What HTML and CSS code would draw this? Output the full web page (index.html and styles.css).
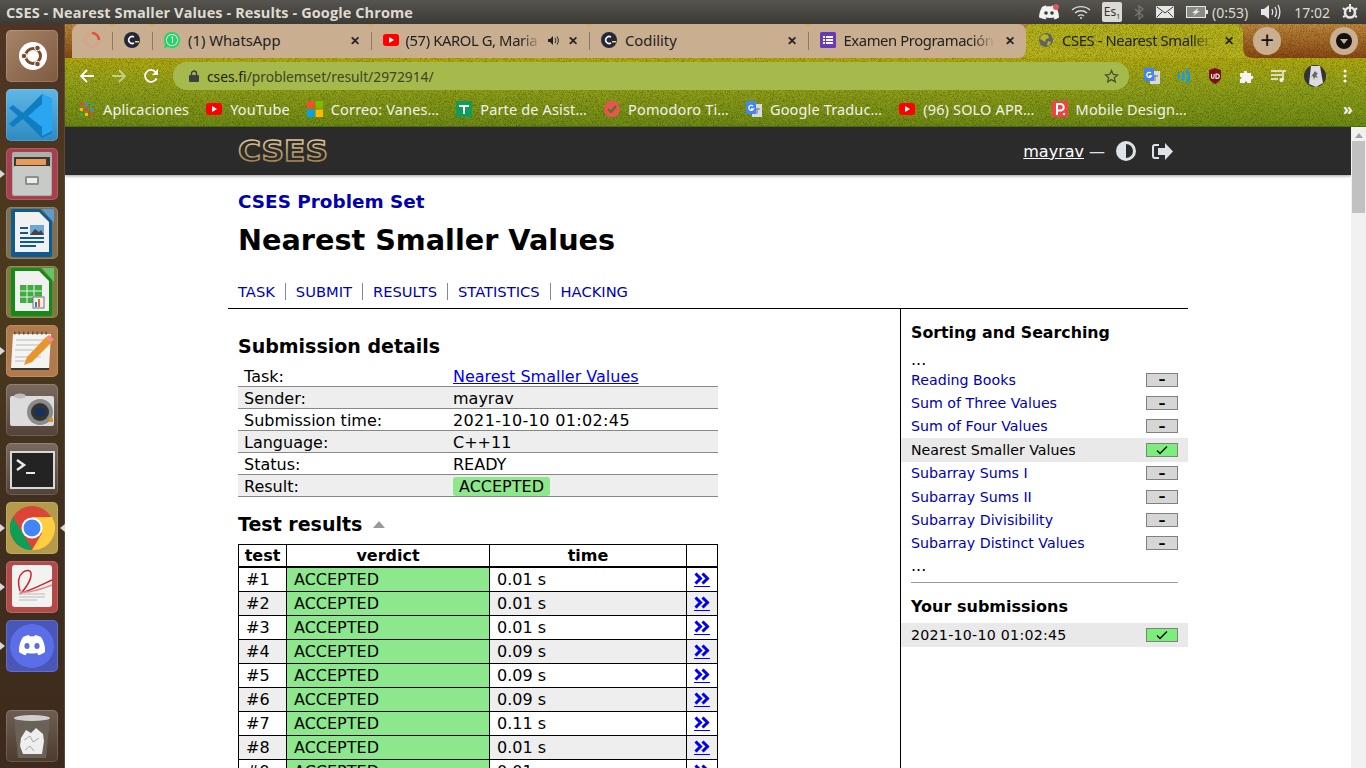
FILE: index.html
```html
<!DOCTYPE html>
<html lang="en">
<head>
    <meta charset="UTF-8">
    <meta name="viewport" content="width=device-width, initial-scale=1.0">
    <title>CSES - Nearest Smaller Values - Results</title>
    <link rel="stylesheet" href="styles.css">
</head>
<body>
<svg class="defs" width="0" height="0">
    <symbol id="chevrons" viewBox="0 0 16 13"><path fill="none" stroke="#0000ee" stroke-width="3" d="M1.500 1.500l5 5-5 5M8.500 1.500l5 5-5 5"/></symbol>
    <symbol id="check" viewBox="0 0 12 10"><path fill="none" stroke="#111" stroke-width="1.500" d="M1 5.500l3 3 7-7"/></symbol>
</svg>
<div class="desktop">

    <!-- Ubuntu top panel -->
    <header class="panel">
        <div class="panel__title">CSES - Nearest Smaller Values - Results - Google Chrome</div>
        <div class="panel__tray">
            <svg class="tray-discord" width="22" height="16" viewBox="0 0 22 16"><path fill="#f2f2f2" d="M4 3c2-1 3-1.500 4-1.500l.5 1c1.500-.2 3.500-.2 5 0l.5-1c1 0 2 .5 4 1.500 2 3.500 3 7 3 10.500-1.500 1-3 1.500-4.500 2l-1-1.500 1.500-1c-3 1.300-7 1.300-10 0l1.500 1-1 1.500C6 15 4.500 14.500 1 13.500 1 10 2 6.500 4 3z"/><circle cx="8" cy="9" r="1.800" fill="#3c3b37"/><circle cx="14" cy="9" r="1.800" fill="#3c3b37"/><circle cx="18" cy="3" r="3" fill="#e25555"/></svg>
            <svg class="tray-wifi" width="20" height="14" viewBox="0 0 20 14"><g fill="none" stroke="#dcdcdc" stroke-width="1.400"><path d="M1 5c5-4.500 13-4.500 18 0"/><path d="M4 8c3.500-3 8.500-3 12 0"/><path d="M7 11c2-1.500 4-1.500 6 0"/></g><circle cx="10" cy="13" r="1" fill="#dcdcdc"/></svg>
            <span class="tray-lang">Es<sub>1</sub></span>
            <svg class="tray-bt" width="10" height="15" viewBox="0 0 10 15"><path fill="none" stroke="#77766f" stroke-width="1.300" d="M1 4l8 7-4 3V1l4 3-8 7"/></svg>
            <svg class="tray-mail" width="18" height="12" viewBox="0 0 18 12"><rect width="18" height="12" rx="1" fill="#e6e6e6"/><path fill="none" stroke="#3c3b37" d="M1 1l8 6 8-6M1 11l5-5M17 11l-5-5"/></svg>
            <svg class="tray-battery" width="22" height="12" viewBox="0 0 22 12"><rect x=".5" y=".5" width="19" height="11" fill="#8a8a84" stroke="#e6e6e6"/><rect x="20" y="4" width="2" height="4" fill="#e6e6e6"/><path fill="#e6e6e6" d="M12 2L6 7h3l-2 3 7-5h-3z"/></svg>
            <span class="tray-text tray-time-left">(0:53)</span>
            <svg class="tray-sound" width="20" height="16" viewBox="0 0 20 16"><path fill="#e6e6e6" d="M0 5h3l5-4v14l-5-4H0z"/><g fill="none" stroke="#e6e6e6" stroke-width="1.300"><path d="M11 5c1 2 1 4 0 6"/><path d="M14 3c1.800 3 1.800 7 0 10"/><path d="M17 1c2.500 4 2.500 10 0 14"/></g></svg>
            <span class="tray-text tray-clock">17:02</span>
            <svg class="tray-power" width="16" height="16" viewBox="0 0 16 16"><circle cx="8" cy="8.500" r="5" fill="none" stroke="#e6e6e6" stroke-width="2.600"/><rect x="7" y="0" width="2" height="8" fill="#e6e6e6"/><path stroke="#e6e6e6" stroke-width="2" d="M1 4l2 2M15 4l-2 2M1 13l2-1M15 13l-2-1"/></svg>
        </div>
    </header>

    <div class="workspace">

        <!-- launcher -->
        <nav class="launcher">
            <div class="launcher__tile launcher__tile_ubuntu">
                <svg width="52" height="52" viewBox="0 0 52 52"><circle cx="27" cy="26" r="14" fill="#fff"/><circle cx="27" cy="26" r="7.500" fill="none" stroke="#7a4c30" stroke-width="3"/><circle cx="18" cy="26" r="2.800" fill="#7a4c30" stroke="#fff"/><circle cx="31.500" cy="18" r="2.800" fill="#7a4c30" stroke="#fff"/><circle cx="31.500" cy="34" r="2.800" fill="#7a4c30" stroke="#fff"/></svg>
            </div>
            <div class="launcher__tile launcher__tile_vscode">
                <svg width="52" height="52" viewBox="0 0 52 52"><path fill="#0f7dc2" d="M36 5L17 24 7 16l-4 3 9 8-9 8 4 3 10-8 19 19 10-5V10z"/><path fill="#2aa5ef" d="M36 5l10 5v32l-10 5zM36 15L22 27l14 11z"/></svg>
            </div>
            <div class="launcher__tile launcher__tile_files launcher__tile_open">
                <svg width="52" height="52" viewBox="0 0 52 52"><rect x="6" y="4" width="40" height="44" rx="2" fill="#aeb0ae"/><rect x="8" y="9" width="36" height="13" fill="#3a3a38"/><rect x="10" y="11" width="30" height="6" fill="#e89a56"/><rect x="7" y="18" width="38" height="29" rx="2" fill="#c8cac8"/><rect x="19" y="28" width="14" height="9" rx="1.500" fill="#8c8e8c"/><rect x="21" y="30" width="10" height="5" fill="#eee"/></svg>
            </div>
            <div class="launcher__tile launcher__tile_writer">
                <svg width="52" height="52" viewBox="0 0 52 52"><path fill="#5b9bd0" d="M36 2h12v14z"/><path fill="#0f5a8e" d="M7 2h27l12 12v34a2 2 0 0 1-2 2H7a2 2 0 0 1-2-2V4a2 2 0 0 1 2-2z"/><path fill="#f1f1f1" d="M9 5h24l10 10v30H9z"/><path fill="#0f5a8e" d="M14 20h8v2h-8zM14 25h8v2h-8zM14 30h24v2H14zM14 34h24v2H14zM14 38h16v2H14z"/><rect x="24" y="18" width="14" height="10" fill="#6ba7d8"/><path fill="#444" d="M24 28l5-6 4 3 2-2 3 5z"/></svg>
            </div>
            <div class="launcher__tile launcher__tile_calc">
                <svg width="52" height="52" viewBox="0 0 52 52"><path fill="#66c266" d="M36 2h12v14z"/><path fill="#168a16" d="M7 2h27l12 12v34a2 2 0 0 1-2 2H7a2 2 0 0 1-2-2V4a2 2 0 0 1 2-2z"/><path fill="#f1f1f1" d="M9 5h24l10 10v30H9z"/><path fill="#3fae3f" d="M14 19h22v18H14z"/><path stroke="#f1f1f1" d="M14 25h22M14 31h22M21 19v18M28 19v18"/><rect x="27" y="31" width="11" height="11" fill="#eee" stroke="#777"/><path fill="#2a7fc4" d="M29 36h2v5h-2z"/><path fill="#e07020" d="M32 33h2v8h-2z"/></svg>
            </div>
            <div class="launcher__tile launcher__tile_gedit launcher__tile_open">
                <svg width="52" height="52" viewBox="0 0 52 52"><path fill="#f4f4f2" d="M7 9h38l-2 34H5z"/><path stroke="#555" stroke-dasharray="1.500 3" stroke-width="3" d="M8 8h36"/><path stroke="#bbb" d="M10 15h28M10 20h24M9 25h18M9 32h26M9 36h18"/><path fill="#3a3a38" d="M5 43h38v2H5z"/><path fill="#e8952e" d="M40 12l6 5-20 20-8 3 3-8z"/><path fill="#f08a8a" d="M40 12l3-2 5 4-2 3z"/></svg>
            </div>
            <div class="launcher__tile launcher__tile_camera">
                <svg width="52" height="52" viewBox="0 0 52 52"><rect x="4" y="12" width="44" height="30" rx="2" fill="#dcdcdc"/><ellipse cx="14" cy="12" rx="6" ry="2.500" fill="#bbb"/><circle cx="34" cy="28" r="13" fill="#8a8a8a"/><circle cx="34" cy="28" r="9" fill="#333"/><rect x="29" y="24" width="10" height="8" fill="#18305c"/><rect x="43" y="34" width="4" height="4" fill="#e09020"/></svg>
            </div>
            <div class="launcher__tile launcher__tile_terminal">
                <svg width="52" height="52" viewBox="0 0 52 52"><rect x="4" y="8" width="45" height="38" fill="#d8d8d8"/><rect x="6" y="10" width="41" height="34" fill="#232323"/><path fill="none" stroke="#e8e8e8" stroke-width="2.500" d="M11 17l7 5-7 5"/><path stroke="#e8e8e8" stroke-width="2" d="M20 30h9"/></svg>
            </div>
            <div class="launcher__tile launcher__tile_chrome launcher__tile_open launcher__tile_active">
                <svg width="52" height="52" viewBox="0 0 52 52"><circle cx="26" cy="26" r="22" fill="#db4437"/><path fill="#0f9d58" d="M7 15l10 17 10 16a22 22 0 0 1-20-33z"/><path fill="#ffcd40" d="M26 15h20a22 22 0 0 1-20 33l10-17z"/><circle cx="26" cy="26" r="10.500" fill="#fff"/><circle cx="26" cy="26" r="8.500" fill="#4285f4"/></svg>
            </div>
            <div class="launcher__tile launcher__tile_acrobat launcher__tile_open">
                <svg width="52" height="52" viewBox="0 0 52 52"><rect x="6" y="4" width="40" height="42" rx="3" fill="#f2f2f0"/><path fill="none" stroke="#c8282c" stroke-width="1.500" d="M14 30C8 10 24 6 25 12c1 8-8 18-10 20 8-2 20-8 31-13"/><path fill="none" stroke="#e58a8a" stroke-width="1.500" d="M14 31c10 1 22-3 32-7"/><path stroke="#bbb" d="M13 33h26M13 36h26M13 39h18"/></svg>
            </div>
            <div class="launcher__tile launcher__tile_discord launcher__tile_open">
                <svg width="52" height="52" viewBox="0 0 52 52"><circle cx="26" cy="26" r="22" fill="#5b6ee8"/><path fill="#fff" d="M17 17c2.500-1.200 4-1.700 6-2l.8 1.500c1.500-.2 3-.2 4.400 0L29 15c2 .3 3.500.8 6 2 3 4.500 4.500 9.500 4 15-2.500 1.800-4.500 2.700-6.500 3.300L31 33l2-1c-4 2-10 2-14 0l2 1-1.500 2.300c-2-.6-4-1.500-6.500-3.300-.5-5.500 1-10.500 4-15z"/><ellipse cx="21" cy="26" rx="2.600" ry="3" fill="#5b6ee8"/><ellipse cx="31" cy="26" rx="2.600" ry="3" fill="#5b6ee8"/></svg>
            </div>
            <div class="launcher__tile launcher__tile_trash">
                <svg width="52" height="52" viewBox="0 0 52 52"><path fill="#6a6257" d="M8 8h36l-4 40H12z"/><ellipse cx="26" cy="8" rx="18" ry="3" fill="#cfcfcf"/><path fill="#eee" d="M15 28l5-8 5 3 5-5 7 6 1 7-2 13H17l-3-8z"/><path fill="none" stroke="#aaa" d="M18 30l6-4 3 6 6-4M19 40l5-4 4 5"/></svg>
            </div>
        </nav>

        <div class="browser">
            <div class="browser__head">
                <!-- grainy theme picture behind tabs and toolbar -->
                <svg class="theme" width="1301" height="103" viewBox="0 0 1301 103">
                    <defs>
                        <linearGradient id="theme-frame" x1="0" y1="0" x2="0" y2="1"><stop offset="0" stop-color="#c08a3a"/><stop offset="1" stop-color="#8c4a14"/></linearGradient>
                        <linearGradient id="theme-grass" x1="0" y1="0" x2="0" y2="1"><stop offset="0" stop-color="#b3ab10"/><stop offset=".4" stop-color="#94a31a"/><stop offset="1" stop-color="#6f8b14"/></linearGradient>
                        <filter id="theme-noise" x="0" y="0" width="100%" height="100%"><feTurbulence type="fractalNoise" baseFrequency="1.300" numOctaves="2" seed="4"/><feColorMatrix values="0 0 0 0 0 0 0 0 0 0 0 0 0 0 0 0 0 0 2 -0.800"/></filter>
                    </defs>
                    <rect width="1301" height="34" fill="url(#theme-frame)"/>
                    <path fill="url(#theme-grass)" d="M0 34H1301V103H0z"/>
                    <path fill="#b7b41c" d="M950 34c6 0 9-3 9-10V10c0-6 4-10 10-10h200c6 0 9 4 9 10v14c0 7 4 10 11 10z"/>
                    <rect width="1301" height="103" filter="url(#theme-noise)" opacity=".35"/>
                </svg>

                <div class="tabs">
                    <div class="tab tab_pinned">
                        <svg width="18" height="18" viewBox="0 0 18 18"><circle cx="9" cy="9" r="7" fill="none" stroke="#dba08c" stroke-width="2.500"/><path fill="none" stroke="#e0533d" stroke-width="2.500" d="M9 2a7 7 0 0 1 7 7"/></svg>
                    </div>
                    <div class="tab tab_pinned">
                        <svg width="16" height="16" viewBox="0 0 16 16"><circle cx="8" cy="8" r="8" fill="#25283a"/><path fill="none" stroke="#fff" stroke-width="1.500" d="M10 5a3.500 3.500 0 1 0 0 6"/><rect x="11" y="9" width="4" height="1.500" fill="#f4e04d"/></svg>
                    </div>
                    <div class="tab">
                        <svg width="16" height="16" viewBox="0 0 16 16"><path fill="#25d366" d="M8 0a8 8 0 0 1 0 16c-1.500 0-2.800-.4-4-1l-4 1 1-3.800A8 8 0 0 1 8 0z"/><circle cx="8" cy="8" r="6" fill="#fff"/><circle cx="8" cy="8" r="5.200" fill="#25d366"/><path fill="#fff" d="M8 4.500h1V11H8V6H6.800z"/></svg>
                        <span class="tab__title">(1) WhatsApp</span>
                        <span class="tab__close">✕</span>
                    </div>
                    <div class="tab tab_audio">
                        <svg width="16" height="12" viewBox="0 0 16 12"><rect width="16" height="12" rx="3" fill="#f00"/><path fill="#fff" d="M6 3l5 3-5 3z"/></svg>
                        <span class="tab__title tab__title_fade">(57) KAROL G, Maria</span>
                        <svg class="tab__sound" width="11" height="11" viewBox="0 0 11 11"><path fill="#222" d="M0 4h2l3-3v9L2 7H0z"/><path fill="none" stroke="#222" d="M7 3c1 1.500 1 3.500 0 5M9 1.500c1.800 2.500 1.800 5.500 0 8"/></svg>
                        <span class="tab__close">✕</span>
                    </div>
                    <div class="tab">
                        <svg width="16" height="16" viewBox="0 0 16 16"><circle cx="8" cy="8" r="8" fill="#25283a"/><path fill="none" stroke="#fff" stroke-width="1.500" d="M10 5a3.500 3.500 0 1 0 0 6"/><rect x="11" y="9" width="4" height="1.500" fill="#f4e04d"/></svg>
                        <span class="tab__title">Codility</span>
                        <span class="tab__close">✕</span>
                    </div>
                    <div class="tab">
                        <svg width="16" height="16" viewBox="0 0 16 16"><rect width="16" height="16" rx="1.500" fill="#673ab7"/><path fill="#fff" d="M3 4h2v2H3zM6 4h7v2H6zM3 7h2v2H3zM6 7h7v2H6zM3 10h2v2H3zM6 10h7v2H6z"/></svg>
                        <span class="tab__title tab__title_fade">Examen Programación</span>
                        <span class="tab__close">✕</span>
                    </div>
                    <div class="tab tab_active">
                        <svg width="16" height="16" viewBox="0 0 16 16"><circle cx="8" cy="8" r="7" fill="#5f6368"/><path fill="#b7b41c" d="M6 2l4 1 1 3-3 1-1 3-3-2-2-1 1-3zM10 9l3 1-2 4-2-1z"/></svg>
                        <span class="tab__title tab__title_fade">CSES - Nearest Smaller</span>
                        <span class="tab__close">✕</span>
                    </div>
                    <div class="tabs__new">+</div>
                    <div class="tabs__menu"><span class="tabs__menu-dot"></span></div>
                </div>

                <div class="toolbar">
                    <svg class="toolbar__btn" width="16" height="16" viewBox="0 0 16 16"><path fill="none" stroke="#fff" stroke-width="1.800" d="M15 8H2M8 2L2 8l6 6"/></svg>
                    <svg class="toolbar__btn toolbar__btn_off" width="16" height="16" viewBox="0 0 16 16"><path fill="none" stroke="#c3cf85" stroke-width="1.800" d="M1 8h13M8 2l6 6-6 6"/></svg>
                    <svg class="toolbar__btn" width="16" height="16" viewBox="0 0 16 16"><path fill="none" stroke="#fff" stroke-width="1.800" d="M13.500 10.500A6 6 0 1 1 13 4.500"/><path fill="#fff" d="M15 1v6H9z"/></svg>
                    <div class="omnibox">
                        <svg width="10" height="12" viewBox="0 0 10 12"><rect y="5" width="10" height="7" rx="1" fill="#3c4043"/><path fill="none" stroke="#3c4043" stroke-width="1.400" d="M2.500 5V3.500a2.500 2.500 0 0 1 5 0V5"/></svg>
                        <span class="omnibox__url"><span class="omnibox__host">cses.fi</span>/problemset/result/2972914/</span>
                        <svg class="omnibox__star" width="15" height="15" viewBox="0 0 15 15"><path fill="none" stroke="#4a5230" stroke-width="1.300" d="M7.500 1.500l1.800 4 4.200.4-3.200 2.800 1 4.200-3.800-2.300-3.800 2.300 1-4.200L1.500 5.900l4.200-.4z"/></svg>
                    </div>
                    <div class="extensions">
                        <svg width="16" height="16" viewBox="0 0 16 16"><rect x="6" y="3" width="10" height="13" fill="#d7dadf"/><rect width="10" height="13" rx="1" fill="#4285f4"/><path fill="none" stroke="#fff" stroke-width="1.300" d="M7 5a2.500 2.500 0 1 0 .5 3H5"/><path stroke="#777" d="M9 8h5M11 7v6"/></svg>
                        <svg width="14" height="16" viewBox="0 0 14 16"><g fill="none" stroke="#0a9dff" stroke-width="2.400"><path d="M1.500 6c1 1.500 1 3 0 4.500"/><path d="M5.500 4c1.500 2.500 1.500 6 0 8.500"/><path d="M9.500 1.500c3 4 3 9 0 13"/></g></svg>
                        <svg width="14" height="16" viewBox="0 0 14 16"><path fill="#7b1113" d="M1 2l6-2 6 2v7c0 3-3 5.500-6 7-3-1.500-6-4-6-7z"/><path fill="none" stroke="#fff" stroke-width="1.100" d="M3.500 6v3a1.300 1.300 0 0 0 2.600 0V6M8 6h1a2 2 0 0 1 0 4.500H8z"/></svg>
                        <svg width="15" height="15" viewBox="0 0 15 15"><path fill="#f4f4f4" d="M1 4h4c-1-3 4-3 3 0h4v3c3-1 3 4 0 3v4H8c1-2-3-2-2 0H1v-4c2 1 2-3 0-2z"/></svg>
                        <svg width="16" height="14" viewBox="0 0 16 14"><path stroke="#f4f4f4" stroke-width="1.500" d="M0 2h11M0 6h11M0 10h7"/><path fill="none" stroke="#f4f4f4" stroke-width="1.500" d="M12 11V2h3"/><circle cx="10.500" cy="11" r="2" fill="#f4f4f4"/></svg>
                        <svg width="22" height="22" viewBox="0 0 22 22"><circle cx="11" cy="11" r="11" fill="#333"/><path fill="#ddd" d="M7 1h9l3 17-7 4-7-3z"/><path fill="#666" d="M11 6l3 3-2 1 2 3-3-1-1 3-1-4-2 1 2-3z"/></svg>
                        <svg width="4" height="14" viewBox="0 0 4 14"><circle cx="2" cy="2" r="1.600" fill="#f4f4f4"/><circle cx="2" cy="7" r="1.600" fill="#f4f4f4"/><circle cx="2" cy="12" r="1.600" fill="#f4f4f4"/></svg>
                    </div>
                </div>

                <div class="bookmarks">
                    <a class="bookmark bookmark_apps"><svg width="14" height="14" viewBox="0 0 14 14"><path fill="#ea4335" d="M0 1h3v3H0z"/><path fill="#4285f4" d="M5 1h3v3H5z"/><path fill="#34a853" d="M10 1h3v3h-3z"/><path fill="#fbbc05" d="M0 6h3v3H0z"/><path fill="#ea4335" d="M5 6h3v3H5z"/><path fill="#4285f4" d="M10 6h3v3h-3z"/><path fill="#34a853" d="M0 11h3v3H0z"/><path fill="#fbbc05" d="M5 11h3v3H5z"/><path fill="#ea4335" d="M10 11h3v3h-3z"/></svg>Aplicaciones</a>
                    <a class="bookmark"><svg width="16" height="12" viewBox="0 0 16 12"><rect width="16" height="12" rx="3" fill="#f00"/><path fill="#fff" d="M6 3l5 3-5 3z"/></svg>YouTube</a>
                    <a class="bookmark"><svg width="16" height="16" viewBox="0 0 16 16"><path fill="#f25022" d="M0 0h7.500v7.500H0z"/><path fill="#7fba00" d="M8.500 0H16v7.500H8.500z"/><path fill="#00a4ef" d="M0 8.500h7.500V16H0z"/><path fill="#ffb900" d="M8.500 8.500H16V16H8.500z"/></svg>Correo: Vanes…</a>
                    <a class="bookmark"><svg width="16" height="16" viewBox="0 0 16 16"><rect width="16" height="16" fill="#0f9d58"/><path fill="#fff" d="M3 4h10v2H9v7H7V6H3z"/></svg>Parte de Asist…</a>
                    <a class="bookmark"><svg width="16" height="16" viewBox="0 0 16 16"><circle cx="8" cy="8" r="8" fill="#e8544f"/><path fill="none" stroke="#4a7a22" stroke-width="2" d="M4 8l3 3 5-6"/></svg>Pomodoro Ti…</a>
                    <a class="bookmark"><svg width="16" height="16" viewBox="0 0 16 16"><rect x="6" y="3" width="10" height="13" fill="#d7dadf"/><rect width="10" height="13" rx="1" fill="#4285f4"/><path fill="none" stroke="#fff" stroke-width="1.300" d="M7 5a2.500 2.500 0 1 0 .5 3H5"/><path stroke="#777" d="M9 8h5M11 7v6"/></svg>Google Traduc…</a>
                    <a class="bookmark"><svg width="16" height="12" viewBox="0 0 16 12"><rect width="16" height="12" rx="3" fill="#f00"/><path fill="#fff" d="M6 3l5 3-5 3z"/></svg>(96) SOLO APR…</a>
                    <a class="bookmark"><svg width="16" height="16" viewBox="0 0 16 16"><rect width="16" height="16" fill="#ee4444"/><path fill="none" stroke="#fff" stroke-width="2" d="M5 14V3h3.500a3 3 0 0 1 0 6.500H5"/><rect x="11" y="12" width="2" height="2" fill="#fff"/></svg>Mobile Design…</a>
                    <span class="bookmarks__more">»</span>
                </div>
            </div>

            <div class="viewport">
                <div class="site">
                    <div class="site__bar">
                        <div class="site__bar-inner">
                            <svg class="logo" width="92" height="26" viewBox="0 0 92 26">
                                <defs><linearGradient id="logo-gold" x1="0" y1="0" x2="0" y2="1"><stop offset="0" stop-color="#ecd6a6"/><stop offset="1" stop-color="#94743f"/></linearGradient></defs>
                                <text x="0" y="23" textLength="90" lengthAdjust="spacingAndGlyphs" class="logo__text">CSES</text>
                            </svg>
                            <div class="account">
                                <a class="account__name">mayrav</a>
                                <span class="account__dash">—</span>
                                <svg class="account__icon account__icon_theme" width="20" height="20" viewBox="0 0 20 20"><circle cx="10" cy="10" r="10" fill="#dde3e8"/><path fill="#2b2b2b" d="M10 3a7 7 0 0 1 0 14z"/></svg>
                                <svg class="account__icon" width="21" height="17" viewBox="0 0 21 17"><path fill="none" stroke="#dde3e8" stroke-width="2" d="M7 2H3a2 2 0 0 0-2 2v9a2 2 0 0 0 2 2h4"/><path fill="#dde3e8" d="M13 0l8 8.500-8 8.500v-5H6V5h7z"/></svg>
                            </div>
                        </div>
                    </div>

                    <div class="site__wrap">
                        <div class="title-block">
                            <h2 class="title-block__set">CSES Problem Set</h2>
                            <h1 class="title-block__name">Nearest Smaller Values</h1>
                            <ul class="nav">
                                <li><a>TASK</a></li>
                                <li><a>SUBMIT</a></li>
                                <li><a>RESULTS</a></li>
                                <li><a>STATISTICS</a></li>
                                <li><a>HACKING</a></li>
                            </ul>
                        </div>

                        <div class="columns">
                            <main class="content">
                                <h3 class="content__head">Submission details</h3>
                                <table class="details">
                                    <tr><td>Task:</td><td><a class="details__link">Nearest Smaller Values</a></td></tr>
                                    <tr><td>Sender:</td><td>mayrav</td></tr>
                                    <tr><td>Submission time:</td><td class="details__date">2021-10-10 01:02:45</td></tr>
                                    <tr><td>Language:</td><td>C++11</td></tr>
                                    <tr><td>Status:</td><td>READY</td></tr>
                                    <tr><td>Result:</td><td><span class="badge">ACCEPTED</span></td></tr>
                                </table>

                                <h3 class="content__head content__head_tests">Test results <span class="content__toggle"></span></h3>
                                <table class="tests">
                                    <thead><tr><th class="tests__num">test</th><th class="tests__verdict">verdict</th><th class="tests__time">time</th><th class="tests__more"></th></tr></thead>
                                    <tbody>
                                        <tr><td>#1</td><td class="ok">ACCEPTED</td><td>0.01 s</td><td class="tests__more"><a><svg width="16" height="13"><use href="#chevrons"/></svg></a></td></tr>
                                        <tr><td>#2</td><td class="ok">ACCEPTED</td><td>0.01 s</td><td class="tests__more"><a><svg width="16" height="13"><use href="#chevrons"/></svg></a></td></tr>
                                        <tr><td>#3</td><td class="ok">ACCEPTED</td><td>0.01 s</td><td class="tests__more"><a><svg width="16" height="13"><use href="#chevrons"/></svg></a></td></tr>
                                        <tr><td>#4</td><td class="ok">ACCEPTED</td><td>0.09 s</td><td class="tests__more"><a><svg width="16" height="13"><use href="#chevrons"/></svg></a></td></tr>
                                        <tr><td>#5</td><td class="ok">ACCEPTED</td><td>0.09 s</td><td class="tests__more"><a><svg width="16" height="13"><use href="#chevrons"/></svg></a></td></tr>
                                        <tr><td>#6</td><td class="ok">ACCEPTED</td><td>0.09 s</td><td class="tests__more"><a><svg width="16" height="13"><use href="#chevrons"/></svg></a></td></tr>
                                        <tr><td>#7</td><td class="ok">ACCEPTED</td><td>0.11 s</td><td class="tests__more"><a><svg width="16" height="13"><use href="#chevrons"/></svg></a></td></tr>
                                        <tr><td>#8</td><td class="ok">ACCEPTED</td><td>0.01 s</td><td class="tests__more"><a><svg width="16" height="13"><use href="#chevrons"/></svg></a></td></tr>
                                        <tr><td>#9</td><td class="ok">ACCEPTED</td><td>0.01 s</td><td class="tests__more"><a><svg width="16" height="13"><use href="#chevrons"/></svg></a></td></tr>
                                    </tbody>
                                </table>
                            </main>

                            <aside class="sidebar">
                                <h4 class="sidebar__head sidebar__head_first">Sorting and Searching</h4>
                                <div class="sidebar__dots">...</div>
                                <ul class="tasks">
                                    <li class="tasks__row"><a>Reading Books</a><span class="status">–</span></li>
                                    <li class="tasks__row"><a>Sum of Three Values</a><span class="status">–</span></li>
                                    <li class="tasks__row"><a>Sum of Four Values</a><span class="status">–</span></li>
                                    <li class="tasks__row tasks__row_current"><span>Nearest Smaller Values</span><span class="status status_done"><svg width="12" height="10"><use href="#check"/></svg></span></li>
                                    <li class="tasks__row"><a>Subarray Sums I</a><span class="status">–</span></li>
                                    <li class="tasks__row"><a>Subarray Sums II</a><span class="status">–</span></li>
                                    <li class="tasks__row"><a>Subarray Divisibility</a><span class="status">–</span></li>
                                    <li class="tasks__row"><a>Subarray Distinct Values</a><span class="status">–</span></li>
                                </ul>
                                <div class="sidebar__dots sidebar__dots_end">...</div>
                                <h4 class="sidebar__head sidebar__head_subs">Your submissions</h4>
                                <ul class="tasks">
                                    <li class="tasks__row tasks__row_current tasks__row_sub"><span class="tasks__date">2021-10-10 01:02:45</span><span class="status status_done"><svg width="12" height="10"><use href="#check"/></svg></span></li>
                                </ul>
                            </aside>
                        </div>
                    </div>
                </div>

                <div class="scrollbar">
                    <div class="scrollbar__arrow"></div>
                    <div class="scrollbar__thumb"></div>
                </div>
            </div>
        </div>
    </div>
</div>
</body>
</html>
```

FILE: styles.css
```css
html, body {
    margin: 0;
    height: 100%;
    overflow: hidden;
}
.defs { display: block; height: 0; }
.desktop {
    width: 1366px;
    height: 768px;
    display: flex;
    flex-direction: column;
    overflow: hidden;
    font-family: "Noto Sans", sans-serif;
}

/* top panel */
.panel {
    height: 24px;
    flex: none;
    display: flex;
    align-items: center;
    justify-content: space-between;
    background: linear-gradient(#55544e, #3b3a36);
    color: #dfdbd2;
}
.panel__title {
    margin-left: 6px;
    font-size: 14.500px;
    font-weight: 700;
    font-family: "Open Sans", "Noto Sans", sans-serif;
    letter-spacing: 0.1px;
    white-space: nowrap;
}
.panel__tray {
    display: flex;
    align-items: center;
    margin-right: 8px;
}
.tray-discord { margin-right: 11px; }
.tray-wifi { margin-right: 11px; }
.tray-lang {
    width: 20px;
    height: 20px;
    margin-right: 12px;
    background: #dcdad5;
    color: #333;
    font-size: 12px;
    line-height: 20px;
    text-align: center;
    border-radius: 2px;
}
.tray-lang sub { font-size: 7px; line-height: 0; }
.tray-bt { margin-right: 12px; }
.tray-mail { margin-right: 12px; }
.tray-battery { margin-right: 4px; }
.tray-text {
    color: #dfdbd2;
    font-size: 14px;
}
.tray-time-left { margin-right: 13px; }
.tray-sound { margin-right: 13px; }
.tray-clock { margin-right: 12px; }

.workspace {
    flex: 1;
    min-height: 0;
    display: flex;
}

/* launcher */
.launcher {
    width: 65px;
    flex: none;
    box-sizing: border-box;
    padding-top: 6px;
    display: flex;
    flex-direction: column;
    gap: 7px;
    background: linear-gradient(#4f3424, #4a3a1c 40%, #41301f 60%, #3d2a1c);
    border-right: 1px solid #5a4a3a;
}
.launcher__tile {
    position: relative;
    width: 52px;
    height: 52px;
    margin-left: 6px;
    border-radius: 5px;
    box-shadow: inset 0 0 0 1px rgba(255, 255, 255, 0.15);
    flex: none;
}
.launcher__tile svg { display: block; }
.launcher__tile_ubuntu { background: linear-gradient(135deg, #a88468, #7c5a40); }
.launcher__tile_vscode { background: linear-gradient(#5fb7e6, #2f8ac0); }
.launcher__tile_files { background: #a3414f; }
.launcher__tile_writer { background: #7e6e52; }
.launcher__tile_calc { background: #7c7a3e; }
.launcher__tile_gedit { background: #b07a4a; }
.launcher__tile_camera { background: linear-gradient(#7a6a5e, #524237); }
.launcher__tile_terminal { background: linear-gradient(#7a6a5e, #524237); }
.launcher__tile_chrome { background: #b49a4a; }
.launcher__tile_acrobat { background: #b34a4a; }
.launcher__tile_discord { background: #4a56b8; }
.launcher__tile_trash {
    margin-top: 31px;
    background: linear-gradient(#6e5e52, #4c3c30);
}
/* little arrows beside running apps */
.launcher__tile_open::before {
    content: "";
    position: absolute;
    left: -6px;
    top: 22px;
    border: 4px solid transparent;
    border-left: 5px solid #d8d8d8;
    border-right: 0;
}
.launcher__tile_active::after {
    content: "";
    position: absolute;
    right: -7px;
    top: 22px;
    border: 4px solid transparent;
    border-right: 5px solid #d8d8d8;
    border-left: 0;
}

.browser {
    flex: 1;
    min-width: 0;
    display: flex;
    flex-direction: column;
}
.browser__head {
    position: relative;
    height: 103px;
    flex: none;
    background: #7a8f16;
}
.theme {
    position: absolute;
    left: 0;
    top: 0;
}

/* tabs */
.tabs {
    position: relative;
    height: 34px;
    display: flex;
    align-items: center;
    padding-left: 7px;
}
.tab {
    box-sizing: border-box;
    width: 218.500px;
    height: 34px;
    padding: 0 9px 2px 12px;
    display: flex;
    align-items: center;
    gap: 8px;
    background: #c9ae90;
    color: #222;
    font-size: 14.800px;
    position: relative;
    white-space: nowrap;
}
.tab + .tab::before {
    content: "";
    position: absolute;
    left: 0;
    top: 8px;
    height: 18px;
    width: 1px;
    background: #8c7a66;
}
/* gold notch the theme shows between tabs */
.tab + .tab::after {
    content: "";
    position: absolute;
    left: -4px;
    top: 0;
    border: 4px solid transparent;
    border-top: 3px solid #d8a850;
    border-bottom: 0;
}
.tab:first-child { border-top-left-radius: 8px; }
.tab_pinned {
    width: 40px;
    padding: 0 0 2px;
    justify-content: center;
}
.tab_active {
    background: transparent;
    width: 219px;
}
.tab_active::before,
.tab_active::after { display: none; }
.tab:nth-child(6) {
    border-radius: 0 8px 8px 0;
}
.tab__title {
    flex: 1;
    min-width: 0;
    overflow: hidden;
}
.tab__title_fade {
    letter-spacing: -0.4px;
    -webkit-mask-image: linear-gradient(90deg, #000 85%, transparent);
    mask-image: linear-gradient(90deg, #000 85%, transparent);
}
.tab_audio { gap: 7px; }
.tab__sound { flex: none; }
.tab__close {
    font-size: 12px;
    font-weight: 700;
    color: #222;
    width: 14px;
    text-align: center;
}
.tabs__new {
    width: 28px;
    height: 28px;
    margin-left: 8px;
    border-radius: 50%;
    background: #c9ae90;
    color: #111;
    font-size: 24px;
    line-height: 26px;
    text-align: center;
}
.tabs__menu {
    width: 28px;
    height: 28px;
    margin-left: auto;
    margin-right: 8px;
    border-radius: 50%;
    background: #c9ae90;
    display: flex;
    align-items: center;
    justify-content: center;
}
.tabs__menu-dot {
    width: 16px;
    height: 16px;
    border-radius: 50%;
    background: #111;
    position: relative;
}
.tabs__menu-dot::after {
    content: "";
    position: absolute;
    left: 4px;
    top: 6px;
    border: 4px solid transparent;
    border-top: 5px solid #c9ae90;
    border-bottom: 0;
}

/* toolbar */
.toolbar {
    position: relative;
    height: 36px;
    display: flex;
    align-items: center;
    padding-left: 14px;
}
.toolbar__btn {
    flex: none;
    margin-right: 16px;
}
.omnibox {
    width: 956px;
    height: 28px;
    margin-left: -2px;
    box-sizing: border-box;
    padding: 0 10px 0 16px;
    display: flex;
    align-items: center;
    gap: 8px;
    border-radius: 14px;
    background: #a6b94c;
    font-size: 13.800px;
    color: #3e4426;
}
.omnibox__host { color: #20220f; }
.omnibox__url { flex: 1; }
.extensions {
    display: flex;
    align-items: center;
    margin-left: 15px;
    gap: 17px;
}

/* bookmarks */
.bookmarks {
    position: relative;
    height: 33px;
    box-sizing: border-box;
    display: flex;
    align-items: center;
    padding: 0 0 2px 15px;
    gap: 17px;
    color: #f2f2ec;
    font-size: 14.500px;
    letter-spacing: 0.15px;
    white-space: nowrap;
    border-bottom: 1px solid #4a6a10;
}
.bookmark {
    display: flex;
    align-items: center;
    gap: 8px;
}
.bookmark_apps { gap: 9px; }
.bookmarks__more {
    margin-left: auto;
    margin-right: 13px;
    font-size: 16px;
    font-weight: 700;
}

/* the CSES page */
.viewport {
    flex: 1;
    min-height: 0;
    display: flex;
    background: #fff;
    overflow: hidden;
}
.site {
    flex: 1;
    min-width: 0;
    font-family: "DejaVu Sans", sans-serif;
    font-size: 16px;
    color: #000;
}
.site a { color: #0000b0; }
.site__bar {
    height: 48px;
    background: #2b2b2b;
    box-shadow: 0 1px 3px rgba(0, 0, 0, 0.4);
}
.site__bar-inner,
.site__wrap {
    width: 960px;
    margin-left: 163px;
}
.site__bar-inner {
    height: 100%;
    display: flex;
    align-items: center;
    justify-content: space-between;
}
.logo {
    margin-left: 10px;
    overflow: visible;
}
.logo__text {
    font-family: "DejaVu Sans", sans-serif;
    font-size: 29px;
    font-weight: 700;
    fill: #2b2b2b;
    stroke: url(#logo-gold);
    stroke-width: 1.500;
}
.account {
    display: flex;
    align-items: center;
    gap: 7px;
    margin-right: 15px;
    color: #dde3e8;
}
.site a.account__name {
    color: #fff;
    text-decoration: underline;
}
.account__dash { margin-left: -2px; }
.account__icon { margin-left: 9px; }
.account__icon_theme { margin-left: 4px; }

.title-block {
    padding: 16px 10px 0;
    border-bottom: 1px solid #000;
    height: 134px;
    box-sizing: border-box;
}
.title-block__set {
    margin: 0;
    font-size: 18.400px;
    line-height: 22px;
    color: #0000b0;
}
.title-block__name {
    margin: 7px 0 0;
    font-size: 28.700px;
    line-height: 40px;
}
.nav {
    list-style: none;
    display: flex;
    margin: 23px 0 0;
    padding: 0;
    font-size: 14.700px;
}
.nav li {
    padding: 0 10px;
    border-left: 1px solid #888;
    line-height: 17px;
}
.nav li:first-child {
    padding-left: 0;
    border-left: 0;
}

.columns { display: flex; }
.content {
    padding: 25px 0 0 10px;
    box-sizing: content-box;
    flex: none;
    width: 662px;
}
.content__head {
    margin: 0;
    font-size: 19px;
    line-height: 24px;
}
.content__head_tests { margin-top: 15px; }
.content__toggle {
    display: inline-block;
    margin-left: 4px;
    vertical-align: 3px;
    border: 6px solid transparent;
    border-bottom: 7px solid #999;
    border-top: 0;
}
.details {
    width: 480px;
    border-collapse: collapse;
    margin-top: 7px;
}
.details td {
    padding: 1px 6px 0;
    height: 20px;
    line-height: 19px;
    border-bottom: 1px solid #888;
}
.details td:first-child { width: 197px; }
.details tr:nth-child(even) { background: #eee; }
.details__date { letter-spacing: 0.37px; }
.details__link { text-decoration: underline; }
.site a.details__link { color: #0000ee; }
.badge {
    display: inline-block;
    padding: 0 6px;
    background: #8de88d;
    border-radius: 3px;
    line-height: 19px;
}
.tests {
    width: 480px;
    margin-top: 8px;
    border-collapse: collapse;
    table-layout: fixed;
}
.tests th {
    border: 1px solid #000;
    border-bottom-width: 2px;
    height: 19px;
    line-height: 20px;
    padding: 1px 0 0;
}
.tests td {
    border: 1px solid #000;
    height: 22px;
    padding: 1px 7px 0;
    line-height: 20px;
}
.tests__num { width: 47px; }
.tests__verdict { width: 202px; }
.tests__time { width: 196px; }
.tests tbody tr:nth-child(even) { background: #eee; }
.tests td.ok { background: #8de88d; }
.tests td.tests__more {
    text-align: center;
    line-height: 0;
    padding: 0;
}
.site .tests__more a {
    display: inline-block;
    padding-bottom: 1px;
    border-bottom: 1px solid #0000ee;
}

.sidebar {
    flex: 1;
    border-left: 1px solid #000;
    height: 480px;
    font-size: 14.200px;
}
.sidebar__head {
    margin: 0;
    padding: 14px 10px 0;
    font-size: 16px;
    line-height: 20px;
}
.sidebar__head_first { font-size: 15.800px; }
.sidebar__dots {
    padding: 10px 10px 2px;
    font-size: 16px;
    line-height: 13px;
}
.sidebar__dots_end {
    margin: 0 10px;
    padding: 4px 0 10px;
    border-bottom: 1px solid #999;
}
.tasks {
    list-style: none;
    margin: 0;
    padding: 0;
}
.tasks__row {
    height: 23.400px;
    padding: 0 10px;
    display: flex;
    align-items: center;
    justify-content: space-between;
}
.tasks__row_current { background: #e9e9e9; }
.tasks__row_sub {
    height: 24px;
    margin-top: 6px;
}
.tasks__date { letter-spacing: 0.26px; }
.status {
    box-sizing: border-box;
    width: 32px;
    height: 14px;
    display: flex;
    align-items: center;
    justify-content: center;
    border: 1px solid #808080;
    background: #d6d6d6;
    font-size: 14px;
    font-weight: 700;
    line-height: 11px;
}
.status_done { background: #7cee7c; }

/* scrollbar */
.scrollbar {
    width: 15px;
    flex: none;
    background: #f1f1f1;
    display: flex;
    flex-direction: column;
    align-items: center;
}
.scrollbar__arrow {
    margin-top: 6px;
    border: 4px solid transparent;
    border-bottom: 5px solid #a3a3a3;
    border-top: 0;
}
.scrollbar__thumb {
    width: 13px;
    height: 72px;
    margin-top: 3px;
    background: #c1c1c1;
}
```
